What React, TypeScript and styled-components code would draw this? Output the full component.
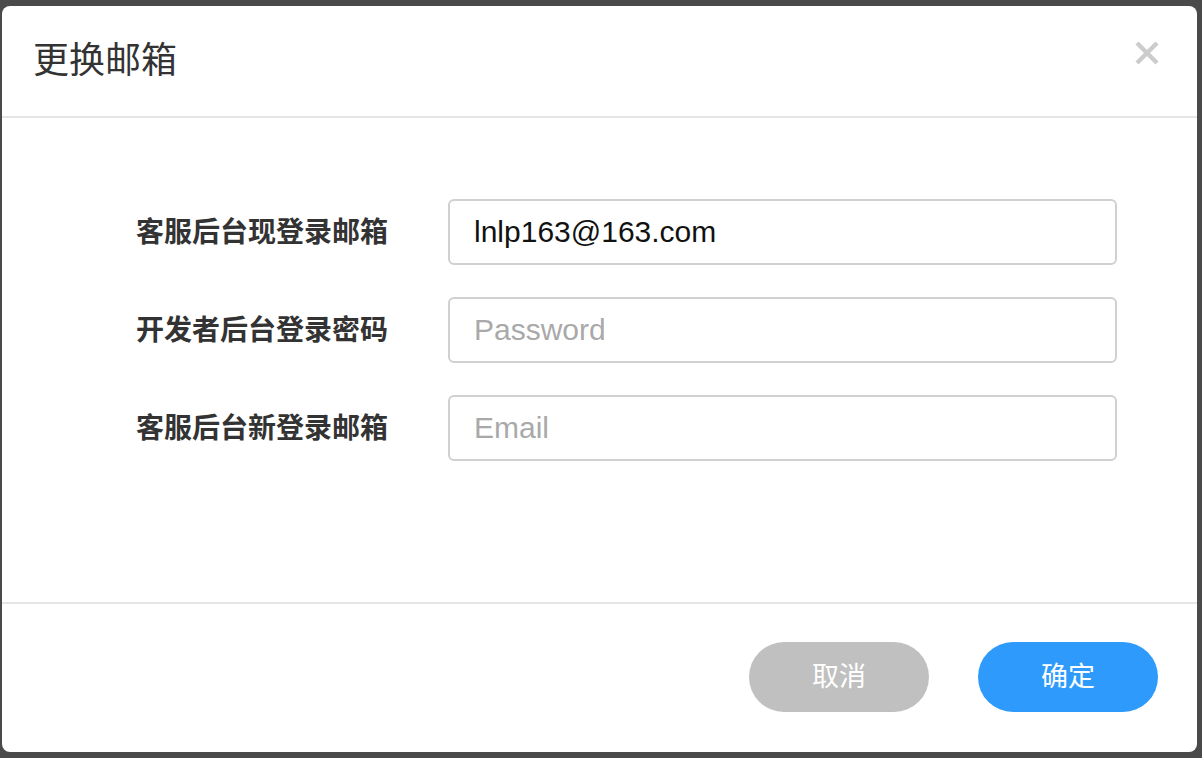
import React from "react";
import styled, { createGlobalStyle } from "styled-components";

const GlobalStyle = createGlobalStyle`
    html, body {
        margin: 0;
        padding: 0;
        background: #4a4a4a;
    }
    * {
        box-sizing: border-box;
    }
`;

const cjk = `"Noto Sans CJK SC", "Noto Sans", sans-serif`;

const Backdrop = styled.div`
    width: 1202px;
    height: 758px;
    padding: 6px 5px 6px 2px;
    background: #4a4a4a;
    display: flex;
`;

const Modal = styled.div`
    flex: 1;
    background: #ffffff;
    border-radius: 8px;
    display: flex;
    flex-direction: column;
    overflow: hidden;
`;

const Header = styled.div`
    height: 112px;
    padding: 0 37px 0 31px;
    display: flex;
    align-items: center;
    justify-content: space-between;
    border-bottom: 2px solid #e6e6e6;
`;

const Title = styled.h2`
    margin: 0;
    font-family: ${cjk};
    font-size: 36px;
    font-weight: 400;
    color: #333333;
    padding-bottom: 8px;
`;

const CloseButton = styled.button`
    border: none;
    background: transparent;
    padding: 0;
    width: 26px;
    height: 26px;
    margin-top: -16px;
    cursor: pointer;
    display: flex;
`;

const Body = styled.div`
    flex: 1;
    padding: 81px 80px 0 134px;
    display: grid;
    grid-template-columns: 312px 1fr;
    grid-auto-rows: 66px;
    row-gap: 32px;
    align-content: start;
`;

const Label = styled.label`
    font-family: ${cjk};
    font-size: 28px;
    font-weight: 700;
    color: #333333;
    display: flex;
    align-items: center;
    padding-bottom: 4px;
`;

const Input = styled.input`
    width: 100%;
    height: 66px;
    border: 2px solid #d0d0d0;
    border-radius: 6px;
    padding: 0 24px;
    font-family: "Liberation Sans", Arial, sans-serif;
    font-size: 30px;
    color: #111111;
    outline: none;
    &::placeholder {
        color: #a9a9a9;
    }
`;

const Footer = styled.div`
    height: 150px;
    border-top: 2px solid #e6e6e6;
    padding: 0 39px 0 0;
    display: flex;
    align-items: center;
    justify-content: flex-end;
    gap: 49px;
`;

const Button = styled.button<{ $primary?: boolean }>`
    width: 180px;
    height: 70px;
    border: none;
    border-radius: 35px;
    background: ${(p) => (p.$primary ? "#2e9bfc" : "#c0c0c0")};
    color: #ffffff;
    font-family: ${cjk};
    font-size: 27px;
    cursor: pointer;
    margin-top: -3px;
    padding: 0 0 5px;
`;

function CloseIcon() {
    return (
        <svg width="26" height="26" viewBox="0 0 26 26">
            <path d="M3 3 L23 23 M23 3 L3 23" stroke="#cccccc" strokeWidth="4.5" strokeLinecap="butt" />
        </svg>
    );
}

export default function App() {
    return (
        <>
            <GlobalStyle />
            <Backdrop>
                <Modal>
                    <Header>
                        <Title>更换邮箱</Title>
                        <CloseButton aria-label="close">
                            <CloseIcon />
                        </CloseButton>
                    </Header>
                    <Body>
                        <Label>客服后台现登录邮箱</Label>
                        <Input defaultValue="lnlp163@163.com" />
                        <Label>开发者后台登录密码</Label>
                        <Input type="password" placeholder="Password" />
                        <Label>客服后台新登录邮箱</Label>
                        <Input placeholder="Email" />
                    </Body>
                    <Footer>
                        <Button>取消</Button>
                        <Button $primary>确定</Button>
                    </Footer>
                </Modal>
            </Backdrop>
        </>
    );
}
